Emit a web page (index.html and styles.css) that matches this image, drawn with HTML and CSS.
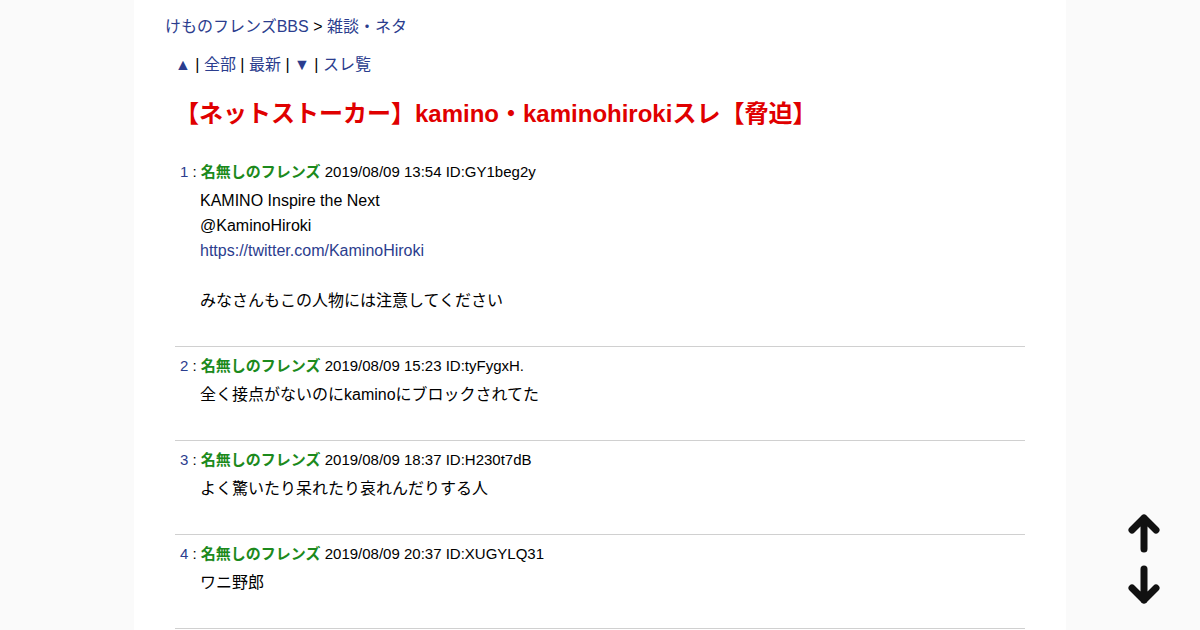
FILE: index.html
```html
<!DOCTYPE html>
<html lang="ja">
<head>
<meta charset="utf-8">
<title>【ネットストーカー】kamino・kaminohirokiスレ【脅迫】</title>
<link rel="stylesheet" href="styles.css">
</head>
<body>
<div class="page">
  <div class="breadcrumb"><a href="#">けものフレンズBBS</a> &gt; <a href="#">雑談・ネタ</a></div>
  <div class="nav"><a href="#">▲</a> | <a href="#">全部</a> | <a href="#">最新</a> | <a href="#">▼</a> | <a href="#">スレ覧</a></div>
  <h1 class="title">【ネットストーカー】kamino・kaminohirokiスレ【脅迫】</h1>
  <div class="posts">
    <div class="post">
      <div class="post-head"><span class="num">1</span> : <span class="name">名無しのフレンズ</span> 2019/08/09 13:54 ID:GY1beg2y</div>
      <div class="post-body">KAMINO Inspire the Next<br>@KaminoHiroki<br><a href="#">https://twitter.com/KaminoHiroki</a><br><br>みなさんもこの人物には注意してください</div>
    </div>
    <div class="post">
      <div class="post-head"><span class="num">2</span> : <span class="name">名無しのフレンズ</span> 2019/08/09 15:23 ID:tyFygxH.</div>
      <div class="post-body">全く接点がないのにkaminoにブロックされてた</div>
    </div>
    <div class="post">
      <div class="post-head"><span class="num">3</span> : <span class="name">名無しのフレンズ</span> 2019/08/09 18:37 ID:H230t7dB</div>
      <div class="post-body">よく驚いたり呆れたり哀れんだりする人</div>
    </div>
    <div class="post">
      <div class="post-head"><span class="num">4</span> : <span class="name">名無しのフレンズ</span> 2019/08/09 20:37 ID:XUGYLQ31</div>
      <div class="post-body">ワニ野郎</div>
    </div>
  </div>
</div>
<div class="scroll-arrows">
  <svg width="40" height="100" viewBox="0 0 40 100" fill="none" stroke="#111" stroke-width="7" stroke-linecap="round" stroke-linejoin="round">
    <path d="M20 8 V39 M8 20 L20 8 L32 20"/>
    <path d="M20 59 V90 M8 78 L20 90 L32 78"/>
  </svg>
</div>
</body>
</html>
```

FILE: styles.css
```css
html, body {
  margin: 0;
  padding: 0;
}
body {
  background: #fafafa;
  font-family: "Liberation Sans", "Noto Sans CJK JP", sans-serif;
  color: #000;
  font-size: 16px;
}
a {
  color: #2b3d8e;
  text-decoration: none;
}
.page {
  width: 932px;
  margin: 0 auto;
  min-height: 630px;
  background: #fff;
  padding: 17px 0 0;
  box-sizing: border-box;
}
.breadcrumb {
  margin-left: 31px;
  line-height: 20px;
}
.nav {
  margin: 18px 0 0 41px;
  line-height: 20px;
}
.title {
  margin: 24px 0 0 41px;
  font-size: 24px;
  line-height: 30px;
  font-weight: bold;
  color: #e00000;
}
.posts {
  margin: 24px 41px 0;
}
.post {
  padding-top: 9px;
  border-bottom: 1px solid #d0d0d0;
}
.post-head {
  padding-left: 5px;
  font-size: 15px;
  line-height: 20px;
}
.num {
  color: #2b3d8e;
}
.name {
  color: #1c8a1c;
  font-weight: bold;
}
.post-body {
  margin-top: 6px;
  padding: 0 0 33px 25px;
  line-height: 25px;
}
.scroll-arrows {
  position: fixed;
  left: 1124px;
  top: 510px;
  width: 40px;
  height: 100px;
}
.scroll-arrows svg {
  display: block;
}
```
